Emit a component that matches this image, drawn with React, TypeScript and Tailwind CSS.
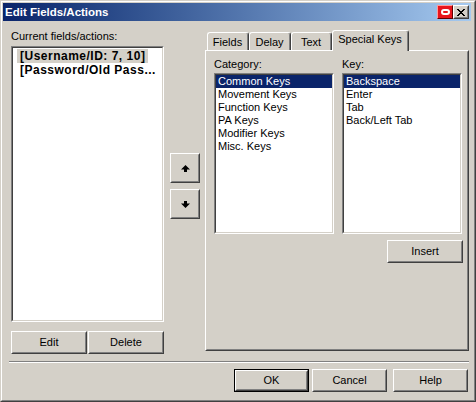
import type { ReactNode } from 'react';

const font = "font-['Liberation_Sans',Arial,sans-serif]";

function Raised({ className = '', inner = '', children }: { className?: string; inner?: string; children?: ReactNode }) {
    return (
        <div className={`border border-t-white border-l-white border-r-[#404040] border-b-[#404040] ${className}`}>
            <div className={`flex h-full w-full items-center justify-center border border-t-[#d4d0c8] border-l-[#d4d0c8] border-r-[#808080] border-b-[#808080] ${inner}`}>
                {children}
            </div>
        </div>
    );
}

function Button({ label, className = 'w-[76px]', isDefault = false }: { label: string; className?: string; isDefault?: boolean }) {
    if (isDefault) {
        return (
            <div className={`h-[23px] border border-black ${className}`}>
                <Raised className="h-full w-full">{label}</Raised>
            </div>
        );
    }
    return <Raised className={`h-[23px] ${className}`}>{label}</Raised>;
}

function Sunken({ className = '', children }: { className?: string; children?: ReactNode }) {
    return (
        <div className={`border border-t-[#808080] border-l-[#808080] border-r-white border-b-white ${className}`}>
            <div className="h-full w-full overflow-hidden border border-t-[#404040] border-l-[#404040] border-r-[#d4d0c8] border-b-[#d4d0c8] bg-white">
                {children}
            </div>
        </div>
    );
}

function Tab({ label, width, active = false }: { label: string; width: string; active?: boolean }) {
    return (
        <div
            className={`${width} ${active ? 'relative z-10 -mb-px h-[21px]' : 'h-[18px]'} rounded-t-[3px] border-t border-l border-r border-t-white border-l-white border-r-[#404040] bg-[#d4d0c8]`}
        >
            <div className={`flex h-full justify-center rounded-tr-[2px] border-r border-r-[#808080] ${active ? 'pt-[2px]' : 'pt-[3px]'}`}>
                {label}
            </div>
        </div>
    );
}

function ListItems({ items }: { items: string[] }) {
    return (
        <div className="flex flex-col">
            {items.map((item, i) => (
                <div key={item} className={`h-[13px] pl-[2px] ${i === 0 ? 'bg-[#0a246a] text-white' : ''}`}>
                    {item}
                </div>
            ))}
        </div>
    );
}

function Arrow({ down = false }: { down?: boolean }) {
    return (
        <svg width="9" height="7" viewBox="0 0 9 7" className={down ? 'rotate-180' : ''}>
            <polygon points="4.5,0 9,4.5 6,4.5 6,7 3,7 3,4.5 0,4.5" fill="black" />
        </svg>
    );
}

const categories = ['Common Keys', 'Movement Keys', 'Function Keys', 'PA Keys', 'Modifier Keys', 'Misc. Keys'];
const keys = ['Backspace', 'Enter', 'Tab', 'Back/Left Tab'];

export default function App() {
    return (
        <div className={`h-[402px] w-[476px] ${font} text-[11px] leading-[13px] text-black`}>
            <div className="h-full w-full border border-t-[#d4d0c8] border-l-[#d4d0c8] border-r-[#404040] border-b-[#404040]">
                <div className="flex h-full w-full flex-col border border-t-white border-l-white border-r-[#808080] border-b-[#808080] bg-[#d4d0c8] pt-px pr-[3px] pb-px pl-px">
                    {/* caption */}
                    <div className="flex h-[18px] items-center bg-linear-to-r from-[#0a246a] to-[#a6caf0] pr-[2px] pl-[2px]">
                        <span className="text-[11.5px] font-bold text-white">Edit Fields/Actions</span>
                        <div className="ml-auto flex">
                            <div className="h-[14px] w-[16px] border border-t-[#ff9a9a] border-l-[#ff9a9a] border-r-[#600000] border-b-[#600000] bg-[#e8141c] flex items-center justify-center">
                                <div className="h-[6px] w-[9px] rounded-full border-2 border-white" />
                            </div>
                            <Raised className="h-[14px] w-[16px]" inner="bg-[#d4d0c8]">
                                <svg width="8" height="7" viewBox="0 0 8 7" shapeRendering="crispEdges">
                                    <path d="M0 0h2v1h1v1h2v-1h1v-1h2v1h-1v1h-1v1h-1v1h1v1h1v1h1v1h-2v-1h-1v-1h-2v1h-1v1h-2v-1h1v-1h1v-1h1v-1h-1v-1h-1v-1h-1z" fill="black" />
                                </svg>
                            </Raised>
                        </div>
                    </div>

                    <div className="flex">
                        {/* fields list */}
                        <div className="ml-[8px] flex w-[153px] flex-col pt-[9px]">
                            <div>Current fields/actions:</div>
                            <Sunken className="mt-[3px] h-[276px]">
                                <div className="flex flex-col items-start pt-px pl-[4px] text-[12px] leading-[14px] font-bold tracking-[0.5px]">
                                    <div className="bg-[#d4d0c8] px-[3px]">[Username/ID: 7, 10]</div>
                                    <div className="px-[3px]">[Password/Old Pass...</div>
                                </div>
                            </Sunken>
                            <div className="mt-[9px] flex gap-px">
                                <Button label="Edit" />
                                <Button label="Delete" />
                            </div>
                        </div>

                        {/* move buttons */}
                        <div className="mt-[132px] ml-[6px] flex flex-col gap-[6px]">
                            <Raised className="h-[30px] w-[30px]">
                                <Arrow />
                            </Raised>
                            <Raised className="h-[30px] w-[30px]">
                                <Arrow down />
                            </Raised>
                        </div>

                        {/* tabs */}
                        <div className="mt-[9px] ml-[5px] w-[264px]">
                            <div className="flex h-[20px] items-end pl-[2px]">
                                <Tab label="Fields" width="w-[42px]" />
                                <Tab label="Delay" width="w-[42px]" />
                                <Tab label="Text" width="w-[41px]" />
                                <Tab label="Special Keys" width="w-[77px]" active />
                            </div>
                            <div className="h-[301px] border border-t-white border-l-white border-r-[#404040] border-b-[#404040]">
                                <div className="h-full w-full border border-t-[#d4d0c8] border-l-[#d4d0c8] border-r-[#808080] border-b-[#808080] pt-[6px] pl-[7px]">
                                    <div className="grid w-[248px] grid-cols-[120px_120px] gap-x-[8px]">
                                        <div>
                                            <div>Category:</div>
                                            <Sunken className="mt-[2px] h-[161px]">
                                                <ListItems items={categories} />
                                            </Sunken>
                                        </div>
                                        <div>
                                            <div>Key:</div>
                                            <Sunken className="mt-[2px] h-[161px]">
                                                <ListItems items={keys} />
                                            </Sunken>
                                        </div>
                                    </div>
                                    <div className="mt-[6px] flex w-[249px] justify-end">
                                        <Button label="Insert" />
                                    </div>
                                </div>
                            </div>
                        </div>
                    </div>

                    {/* separator */}
                    <div className="mt-[7px] ml-[6px] w-[460px] border-t border-b border-t-[#808080] border-b-white" />

                    <div className="mt-[6px] flex justify-end pr-[3px]">
                        <Button label="OK" className="w-[75px]" isDefault />
                        <Button label="Cancel" className="ml-[3px] w-[75px]" />
                        <Button label="Help" className="ml-[6px] w-[75px]" />
                    </div>
                </div>
            </div>
        </div>
    );
}
